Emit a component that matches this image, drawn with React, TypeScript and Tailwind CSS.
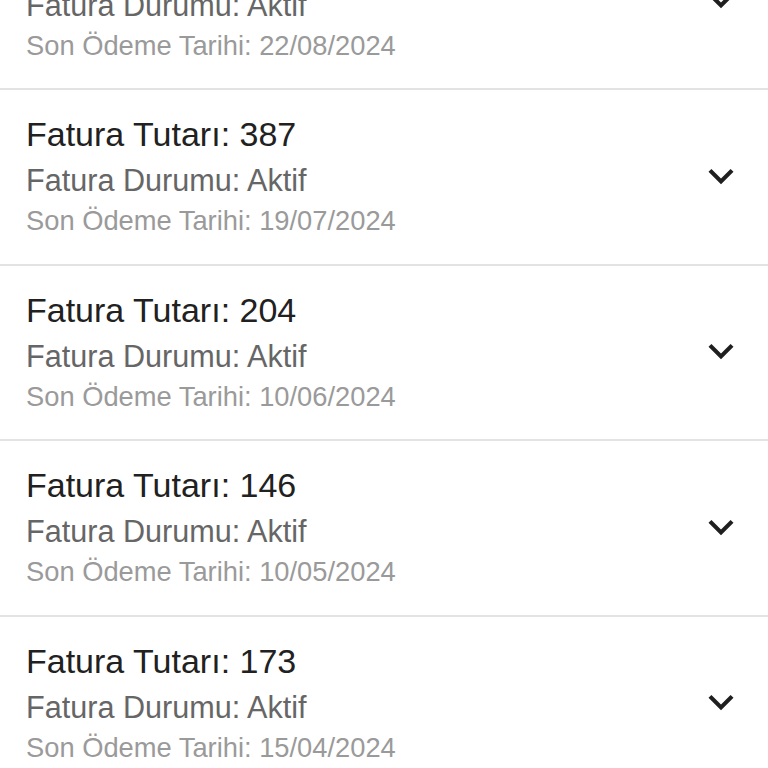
import React from "react";

const items = [
  { amount: "—", status: "Aktif", date: "22/08/2024" },
  { amount: "387", status: "Aktif", date: "19/07/2024" },
  { amount: "204", status: "Aktif", date: "10/06/2024" },
  { amount: "146", status: "Aktif", date: "10/05/2024" },
  { amount: "173", status: "Aktif", date: "15/04/2024" },
  { amount: "158", status: "Aktif", date: "14/03/2024" },
];

function Chevron() {
  return (
    <svg width="50" height="50" viewBox="0 0 24 24" className="shrink-0 -mt-[2px]">
      <path d="M16.59 8.59L12 13.17 7.41 8.59 6 10l6 6 6-6z" fill="#1f1f1f" />
    </svg>
  );
}

export default function App() {
  return (
    <div className="w-[768px] h-[768px] overflow-hidden bg-white font-['Liberation_Sans',Arial,sans-serif]">
      <div className="-mt-[85.5px] flex flex-col">
        {items.map((it, i) => (
          <div
            key={i}
            className="flex items-center justify-between border-b-2 border-[#e3e3e3] pl-[26px] pr-[22px] pt-[24px] pb-[24.5px]"
          >
            <div className="flex flex-col">
              <div className="text-[34px] leading-[40px] text-[#212121]">
                Fatura Tutarı: {it.amount}
              </div>
              <div className="mt-[6px] text-[30.6px] leading-[40px] text-[#666666]">
                Fatura Durumu: {it.status}
              </div>
              <div className="mt-[3px] text-[27.3px] leading-[36px] text-[#9a9a9a]">
                Son Ödeme Tarihi: {it.date}
              </div>
            </div>
            <Chevron />
          </div>
        ))}
      </div>
    </div>
  );
}
